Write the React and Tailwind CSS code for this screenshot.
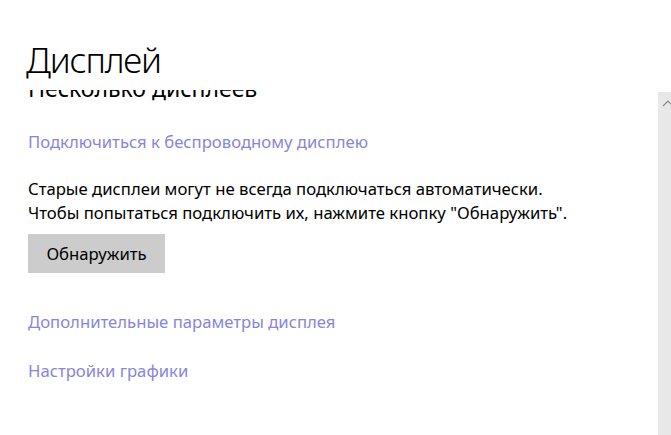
import React from 'react';

const links = {
  wireless: 'Подключиться к беспроводному дисплею',
  advanced: 'Дополнительные параметры дисплея',
  graphics: 'Настройки графики',
};

const SettingsLink = ({ children, className = '' }) => (
  <a href="#" className={`block text-[16.7px] leading-6 text-[#8886d9] ${className}`}>
    {children}
  </a>
);

const App = () => {
  return (
    <div className="w-[671px] h-[435px] bg-white flex flex-col overflow-hidden font-['Noto_Sans',sans-serif] text-black">
      {/* Page header */}
      <div className="h-[90px] shrink-0 pl-[26px] pt-[38px] bg-white">
        <h1 className="text-[35px] leading-[44px] font-light tracking-[-1.2px]">Дисплей</h1>
      </div>

      <div className="flex flex-1 min-h-0">
        {/* Scrolled content */}
        <div className="flex-1 min-w-0 pl-[28px] overflow-hidden">
          <h2 className="text-[23px] leading-[28px] -mt-[16px] whitespace-nowrap">Несколько дисплеев</h2>

          <SettingsLink className="mt-[28px]">{links.wireless}</SettingsLink>

          <p className="mt-[23px] text-[16.7px] leading-6 whitespace-nowrap">
            Старые дисплеи могут не всегда подключаться автоматически.
            <br />
            Чтобы попытаться подключить их, нажмите кнопку "Обнаружить".
          </p>

          <button className="mt-[9px] w-[137px] h-[39px] bg-[#cccccc] text-[16.7px] text-black">
            Обнаружить
          </button>

          <SettingsLink className="mt-[37px]">{links.advanced}</SettingsLink>
          <SettingsLink className="mt-[25px]">{links.graphics}</SettingsLink>
        </div>

        {/* Scrollbar */}
        <div className="w-[13px] shrink-0 mt-[2px] bg-[#e8e8e8] relative">
          <svg
            className="absolute left-[4px] top-[8px]"
            width="12"
            height="7"
            viewBox="0 0 12 7"
            fill="none"
            stroke="#8a8a8a"
            strokeWidth="1.2"
          >
            <path d="M1 6 L6 1 L11 6" />
          </svg>
        </div>
      </div>
    </div>
  );
};

export default App;
